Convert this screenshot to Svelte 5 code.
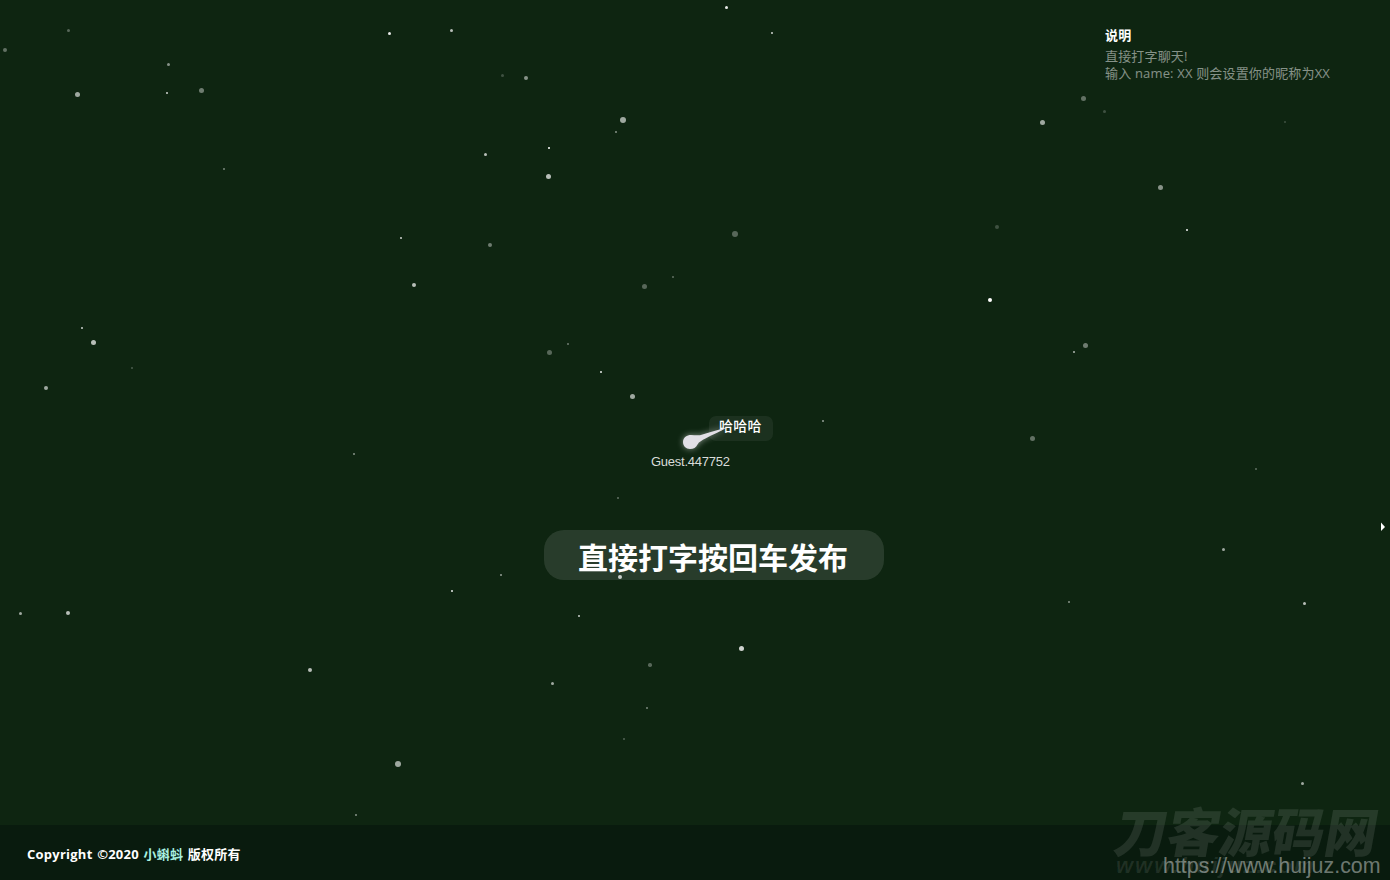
<script>
  const stars = [
    [726,7,1.5,.9],[389,33,1.5,.9],[451,30,1.5,.7],[772,33,1.2,.8],[68,30,1.5,.3],[5,50,2,.35],[168,64,1.5,.5],[77,94,2.5,.6],[167,93,1,.8],[201,90,2.5,.4],
    [502,75,1.5,.2],[526,78,2,.5],[623,120,3,.6],[616,132,1.2,.5],[549,148,.8,.9],[485,154,1.5,.7],[548,176,2.5,.7],[224,169,.8,.4],[401,238,1.3,.8],[490,245,2,.4],
    [735,234,3,.3],[673,277,.7,.3],[644,286,2.5,.3],[414,285,2,.7],[82,328,.8,.7],[93,342,2.5,.7],[132,368,1.2,.25],[46,388,2,.6],[549,352,2.5,.3],[568,344,1.3,.4],
    [601,372,1.3,.9],[632,396,2.5,.6],[823,421,.8,.5],[354,454,1.3,.5],[1032,438,2.5,.35],[618,498,1.3,.35],[1256,469,.8,.3],[1083,98,2.5,.35],[1104,111,1.5,.2],[1042,122,2.5,.6],
    [1285,122,1,.2],[1160,187,2.5,.5],[997,227,2,.2],[1187,230,1.3,.95],[990,300,2,1],[1085,345,2.5,.4],[1074,352,.8,.6],[1223,549,1.5,.6],[1069,602,1.2,.5],[1304,603,1.5,.7],
    [620,577,2,.75],[452,591,1.2,.9],[501,575,.8,.5],[579,616,.8,.7],[20,613,1.5,.6],[68,613,2,.7],[741,648,2.5,.8],[650,665,1.7,.3],[310,670,2,.7],[552,683,1.5,.6],
    [647,708,.8,.4],[624,739,.7,.25],[398,764,3,.6],[1302,783,1.5,.6],[356,815,1.3,.5],[400,856,2.5,.3],[878,863,2.5,.6]
  ];
</script>

<div class="page">
  <main class="sky">
    {#each stars as [x, y, r, o]}
      <i class="star" style="left:{x - r}px;top:{y - r}px;width:{r * 2}px;height:{r * 2}px;opacity:{o}"></i>
    {/each}

    <aside class="help">
      <h4>说明</h4>
      <p>直接打字聊天!</p>
      <p>输入 name: XX 则会设置你的昵称为XX</p>
    </aside>

    <div class="bubble">哈哈哈</div>
    <svg class="tadpole" viewBox="0 0 60 36" width="60" height="36" aria-hidden="true">
      <path d="M2 19 C2 14.500 6 12 10 12 C14 12 17.500 13 21.500 11.500 C29 9 37 7 46 4.500 C39 8.500 31 12 24.500 15.500 C21 17.500 18 18.500 16.500 21.500 C15 24.500 12.500 26 9 26 C5 26 2 23 2 19 Z" fill="#e2dfe6"/>
    </svg>
    <div class="name">Guest.447752</div>

    <div class="hint">直接打字按回车发布</div>
    <svg class="caret" viewBox="0 0 6 10" width="6" height="10" aria-hidden="true"><path d="M1 0.500 L5 5 L1 9 Z" fill="#fff"/></svg>
  </main>

  <footer class="foot">
    <span class="copy">Copyright ©2020 <a href="#top">小蝌蚪</a> 版权所有</span>
  </footer>

  <div class="mark">
    <div class="mark-cn">刀客源码网</div>
    <div class="mark-en">www.huijuz.com</div>
    <div class="mark-url">https://www.huijuz.com</div>
  </div>
</div>

<style>
  :global(body) {
    margin: 0;
    background: #0e2511;
    overflow: hidden;
  }
  .page {
    position: relative;
    width: 1390px;
    height: 880px;
    display: grid;
    grid-template-rows: 1fr 55px;
    overflow: hidden;
    background: #0e2511;
    font-family: "Liberation Sans", "Noto Sans CJK SC", sans-serif;
  }
  .sky {
    position: relative;
  }
  .star {
    position: absolute;
    border-radius: 50%;
    background: #fff;
    filter: blur(0.3px);
  }
  .help {
    position: absolute;
    left: 1105px;
    top: 27px;
    font-family: "Open Sans", "Noto Sans CJK SC", sans-serif;
    font-size: 13px;
    line-height: 17px;
    color: rgba(255, 255, 255, 0.5);
    letter-spacing: 0.17px;
  }
  .help h4 {
    margin: 0 0 5px;
    font-size: 13px;
    line-height: 16px;
    font-weight: 700;
    color: #fff;
  }
  .help p {
    margin: 0;
    white-space: nowrap;
  }
  .bubble {
    position: absolute;
    left: 709px;
    top: 416px;
    width: 64px;
    height: 25px;
    box-sizing: border-box;
    padding-left: 10px;
    border-radius: 7px;
    background: rgba(255, 255, 255, 0.06);
    color: #fff;
    font-size: 14px;
    line-height: 21px;
    font-weight: 500;
    letter-spacing: 0.3px;
    white-space: nowrap;
  }
  .tadpole {
    position: absolute;
    left: 681px;
    top: 423px;
    filter: drop-shadow(0 0 3px rgba(255, 255, 255, 0.5));
  }
  .name {
    position: absolute;
    left: 651px;
    top: 454px;
    font-size: 13px;
    line-height: 16px;
    letter-spacing: -0.25px;
    color: #d9dcd9;
    white-space: nowrap;
  }
  .hint {
    position: absolute;
    left: 544px;
    top: 530px;
    width: 340px;
    height: 50px;
    box-sizing: border-box;
    padding-left: 34px;
    border-radius: 20px;
    background: rgba(255, 255, 255, 0.11);
    color: #fff;
    font-family: "Noto Sans CJK SC", sans-serif;
    font-size: 30px;
    font-weight: 700;
    line-height: 52px;
    white-space: nowrap;
  }
  .caret {
    position: absolute;
    left: 1380px;
    top: 522px;
  }
  .foot {
    position: relative;
    display: flex;
    align-items: center;
    padding: 2px 0 0 27px;
    background: #091b0e;
  }
  .copy {
    font-family: "Open Sans", "Noto Sans CJK SC", sans-serif;
    font-size: 13px;
    font-weight: 700;
    color: #fff;
    white-space: nowrap;
    letter-spacing: 0.24px;
    word-spacing: 1px;
  }
  .copy a {
    color: #a8f0e0;
    text-decoration: none;
  }
  .mark {
    position: absolute;
    left: 1116px;
    top: 802px;
    width: 274px;
    height: 78px;
    pointer-events: none;
  }
  .mark-cn {
    position: absolute;
    left: 0;
    top: 0;
    font-family: "Noto Sans CJK SC", sans-serif;
    font-size: 52.500px;
    font-weight: 900;
    line-height: 54px;
    color: rgba(255, 255, 255, 0.1);
    transform: skewX(-10deg);
    white-space: nowrap;
  }
  .mark-en {
    position: absolute;
    left: 0;
    top: 52px;
    font-size: 22px;
    font-weight: 700;
    font-style: italic;
    line-height: 24px;
    letter-spacing: 2px;
    color: rgba(255, 255, 255, 0.09);
    white-space: nowrap;
  }
  .mark-url {
    position: absolute;
    left: 47px;
    top: 52px;
    font-size: 21.400px;
    line-height: 24px;
    color: rgba(255, 255, 255, 0.42);
    white-space: nowrap;
  }
</style>
